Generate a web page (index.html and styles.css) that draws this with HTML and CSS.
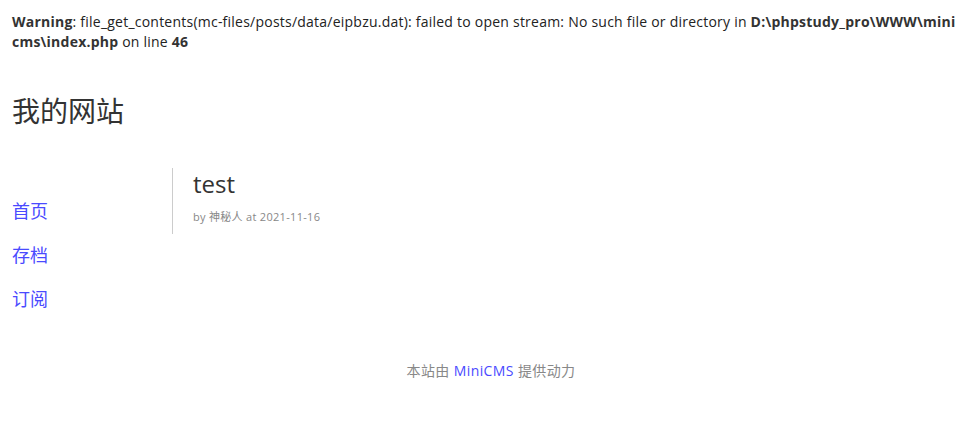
FILE: index.html
```html
<!DOCTYPE html>
<html lang="zh-CN">
<head>
<meta charset="utf-8">
<title>我的网站</title>
<link rel="stylesheet" href="styles.css">
</head>
<body>
<div class="warning"><b>Warning</b>: file_get_contents(mc-files/posts/data/eipbzu.dat): failed to open stream: No such file or directory in <b>D:\phpstudy_pro\WWW\minicms\index.php</b> on line <b>46</b></div>
<div class="page">
  <h1 class="site-title">我的网站</h1>
  <div class="main">
    <nav class="sidebar">
      <a href="#">首页</a>
      <a href="#">存档</a>
      <a href="#">订阅</a>
    </nav>
    <div class="content">
      <div class="post">
        <h2 class="post-title">test</h2>
        <div class="post-meta">by 神秘人 at 2021-11-16</div>
      </div>
    </div>
  </div>
  <div class="footer">本站由 <a href="#">MiniCMS</a> 提供动力</div>
</div>
</body>
</html>
```
FILE: styles.css
```css
html, body {
  margin: 0;
  padding: 0;
  background: #fff;
}
body {
  font-family: "Open Sans", "Noto Sans CJK SC", sans-serif;
  color: #333;
}
.warning {
  font-size: 14px;
  line-height: 20px;
  letter-spacing: 0.23px;
  color: #222;
  padding: 12px 12px 0 12px;
  word-break: break-all;
}
.warning b {
  color: #333;
}
.page {
  padding: 0 12px;
}
.site-title {
  margin: 0;
  padding-top: 39px;
  font-size: 28px;
  line-height: 40px;
  font-weight: normal;
  color: #333;
}
.main {
  display: flex;
  margin-top: 37px;
}
.sidebar {
  width: 160px;
  display: flex;
  flex-direction: column;
  padding-top: 31px;
}
.sidebar a {
  font-size: 18px;
  line-height: 24px;
  margin-bottom: 20px;
  color: #4a4aff;
  text-decoration: none;
}
.content {
  flex: 1;
}
.post {
  border-left: 1px solid #ccc;
  padding-left: 20px;
  height: 66px;
}
.post-title {
  margin: 0;
  font-size: 24px;
  line-height: 32px;
  font-weight: normal;
  color: #333;
}
.post-meta {
  margin-top: 8px;
  font-size: 11px;
  letter-spacing: 0.3px;
  color: #888;
}
.footer {
  text-align: center;
  font-size: 14px;
  letter-spacing: 0.4px;
  color: #888;
  margin-top: 29px;
  padding-left: 9px;
}
.footer a {
  color: #4a4aff;
  text-decoration: none;
}
```
